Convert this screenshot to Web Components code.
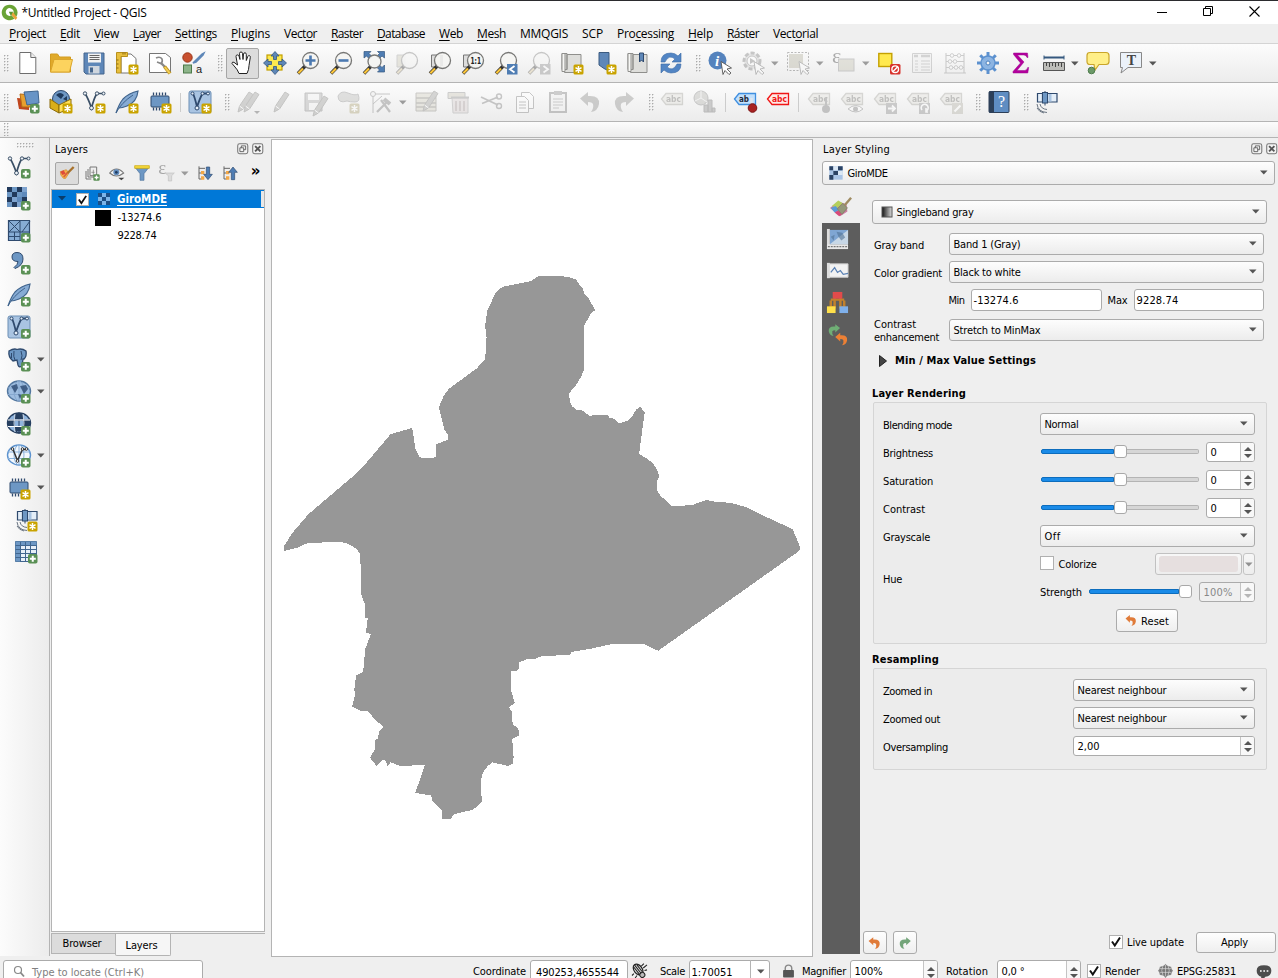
<!DOCTYPE html>
<html lang="en">
<head>
<meta charset="utf-8">
<title>Untitled Project - QGIS</title>
<style>
html,body{margin:0;height:100%;overflow:hidden;background:#efefef}
</style>
</head>
<body>
<qgis-app></qgis-app>
<script>
const define = (name, css, html, onConnect) => {
  const tpl = document.createElement('template');
  tpl.innerHTML = `<style>:host{box-sizing:border-box}*{box-sizing:border-box}${css}</style>${html}`;
  customElements.define(name, class extends HTMLElement {
    constructor() {
      super();
      this.attachShadow({mode: 'open'}).appendChild(tpl.content.cloneNode(true));
    }
    connectedCallback() { if (onConnect) onConnect(this, this.shadowRoot); }
  });
};

/* ---------- icon parts ---------- */
const B = '#6d97c4', D = '#2f4a6e', Y = '#fce94f', G = '#c4a000';
const at = (x, y, s) => `<g transform="translate(${x} ${y})">${s}</g>`;
const plus = at(14, 14, `<rect width="9.5" height="9.5" rx="1.8" fill="#5a9055"/><path d="M4.75 1.8v6M1.8 4.75h6" stroke="#fff" stroke-width="2"/>`);
const star = at(13.5, 13.5, `<rect width="10" height="10" rx="1.5" fill="#c9a300"/><path d="M5 1.5v7M2 3.2l6 3.6M8 3.2L2 6.8" stroke="#fff" stroke-width="1.5"/>`);
const lens = (x = 14.5, y = 9.5, r = 8) => `<path d="M9.2 15L2 22.500" stroke="#333" stroke-width="3.4"/><path d="M7 17.5L2.3 22.2" stroke="#fcc63a" stroke-width="2.2"/><circle cx="${x}" cy="${y}" r="${r}" fill="#f4f4f2" fill-opacity=".92" stroke="#777775" stroke-width="1.3"/>`;
const page = `<path d="M3.8 1.5h11l5 5v16h-16z" fill="#fff" stroke="#6e6e6e"/><path d="M14.8 1.5v5h5" fill="#eee" stroke="#6e6e6e"/>`;
const nodes = `<path d="M3 3.5Q6 8 9.500 18Q12 8 15 3.500h6" fill="none" stroke="#3a4f66" stroke-width="1.700"/><g fill="#eef3f8" stroke="#3a4f66"><circle cx="3" cy="3.500" r="1.700"/><circle cx="9.500" cy="18" r="1.900"/><circle cx="15" cy="3.500" r="1.700"/><circle cx="21.500" cy="3.500" r="1.500"/></g>`;
const vbox = `<rect x="1" y="1" width="22" height="22" rx="2" fill="#a9c4e2" stroke="#6d8fb5"/><path d="M5 3.500Q7 8 9 17Q12 8 14.500 3.500h5" fill="none" stroke="#2f4a6e" stroke-width="1.800"/><g fill="#e5eef8" stroke="#2f4a6e"><circle cx="4.500" cy="3.500" r="1.500"/><circle cx="9" cy="18" r="2"/><circle cx="14.500" cy="3.500" r="1.500"/><circle cx="20" cy="3.500" r="1.500"/></g>`;
const feather = `<path d="M1 23Q4 14 8 9Q14 3 23 1Q22 12 12 16Q7 18 4 18" fill="#86abd4" stroke="#3f638c" stroke-width="1.200"/><path d="M1 23Q6 13 18 5" fill="none" stroke="#3f638c"/>`;
const chip = `<rect x="3" y="6" width="18" height="11" rx="1" fill="${B}" stroke="${D}"/><path d="M5.500 2.500v3M8.500 2.500v3M11.500 2.500v3M14.500 2.500v3M17.500 2.500v3M5.500 17.500v3M8.500 17.500v3M11.500 17.500v3" stroke="${D}" stroke-width="1.300"/>`;
const globe = (f, s, l) => `<ellipse cx="12" cy="11" rx="11.500" ry="10" fill="${f}" stroke="${s}" stroke-width="1.400"/><g fill="none" stroke="${l}" stroke-width="1"><ellipse cx="12" cy="11" rx="5" ry="10"/><path d="M1 8h22M1 14.500h22M12 1v20"/></g>`;
const pencil = `<path d="M4 22l1.500-6L15 2l4 2.500L9.500 19z" fill="#9c9c94" stroke="#77776f"/><path d="M5.500 16l4 3" stroke="#fff"/>`;
const table = `<path d="M2 3h20v18H2z" fill="#d9cf9c" stroke="#857f66"/><path d="M2 8h20M2 13h20M2 17h20" stroke="#857f66" stroke-width="1.500"/>`;
const tag = (f, s, c, t = 'abc') => `<path d="M1.500 9L6 3.500h16.500v11H6z" fill="${f}" stroke="${s}" stroke-width="1.300"/><text x="6" y="12" font-family="DejaVu Sans" font-size="8.500" font-weight="700" textLength="${t.length * 5}" lengthAdjust="spacingAndGlyphs" fill="${c}">${t}</text>`;
const gtag = tag('#e3dfca', '#a5a18c', '#6d6a5c');
const sat = `<path d="M1.500 3.500h5v8.500h-5zM10.500 3.500h10.500v8.500H10.500z" fill="#e4eef8" stroke="#2f4a6e" stroke-width="1.200"/><path d="M14 4v7.500" stroke="#a9c4e2" stroke-width="3"/><rect x="6.500" y="2.500" width="5" height="10.500" fill="#6d97c4" stroke="#2f4a6e"/><path d="M9 1v1.500M9 13v2.500" stroke="#2f4a6e"/><path d="M1 14q1 8 10 8.500M4 14q1 5 7 5.500M1 18q2 4 7 5" fill="none" stroke="#6b7683" stroke-width="1"/>`;
const undo = (c) => `<path d="M1 8.500L9 2v4q12-1 11 8-1 7-8 8 3-4 2-8-1-2-5-2v4z" fill="${c}"/>`;
const redo = (c) => `<g transform="matrix(-1 0 0 1 23 0)">${undo(c)}</g>`;
const book = `<path d="M2 2.500h5v16H2zM7 3.500h14v18H4.500v-3H7z" fill="#dededb" stroke="#8f8f8c"/><path d="M2 2.500h3v18H2z" fill="#f6f6f4" stroke="#8f8f8c"/>`;
const cursor = `<path d="M13 10.500l10.500 6.500-4.500 1 4 4-2 1.500-4-4-2 4z" fill="#fff" stroke="#555" stroke-width=".9"/>`;
const check6 = (a, b, c, w) => { let s = ''; for (let i = 0; i < 9; i++) s += `<rect x="${(i % 3) * w}" y="${Math.floor(i / 3) * w}" width="${w}" height="${w}" fill="${[a, b, a, b, c, b, a, b, a][i]}"/>`; return s; };

const ICONS = {
  logo: `<path d="M12 1a11 11 0 1 0 7 19.500L15 16a5.500 5.500 0 1 1 2-2l4.500 4A11 11 0 0 0 12 1z" fill="#6aa436"/><path d="M12 12l5-.5 6 8-2.500 3z" fill="#e8a33a"/><path d="M11 11h6l-3 6z" fill="#589632"/>`,
  new: page,
  open: `<path d="M1.500 3h7l2 3h11v15h-20z" fill="#e0aa2a" stroke="#d39c20"/><path d="M1.500 21L5 8.500h18.500L20.500 21z" fill="#fcd35e" stroke="#dba62c"/>`,
  save: `<path d="M2 2h20v21H4l-2-2z" fill="#5e87b8" stroke="#45658c"/><path d="M6 2.500h13v9H6z" fill="#f2f2f2"/><path d="M7.500 4.500h10M7.500 6.500h10M7.500 8.500h10" stroke="#666"/><path d="M6.500 15h11v7.500h-11z" fill="#cfd6de"/><path d="M8 16.500h3v5H8z" fill="#45658c"/>`,
  layout: `<path d="M6 3h10l5 4.500V22H6z" fill="#fff" stroke="#777"/><path d="M1.500 1.500h11v4h-6.500v16.500H1.500z" fill="#e8bf3d" stroke="#b8901c"/><path d="M8 1.500v2M10 1.500v2M1.500 9h2M1.500 13h2M1.500 17h2" stroke="#8a6a10"/>${star}`,
  layouts: `<path d="M1.500 2.500h16l5 4v15h-21z" fill="#fff" stroke="#666" stroke-width=".9"/><path d="M8 7q4-2 6 1 1 3-1 4.500l-4-1.500" fill="none" stroke="#888" stroke-width="1.600"/><path d="M13 12l4 4" stroke="#888" stroke-width="2.400"/><path d="M16.500 15.500l5.500 7" stroke="#b98f1e" stroke-width="3.600"/><path d="M16.800 16l5 6.300" stroke="#f3cf55" stroke-width="2"/>`,
  style: `<circle cx="6.500" cy="6.500" r="4.700" fill="#c8502f" stroke="#9c3415"/><path d="M13 11l8-8 2-1-1 2-7 7-3 1z" fill="#5e87b8" stroke="#5e87b8" stroke-width="1.500"/><rect x="2.500" y="14" width="8" height="8" fill="#8db48a" stroke="#4c7b4a"/><text x="15" y="22" font-family="Liberation Sans" font-size="11" fill="#222">a</text>`,
  hand: `<path d="M8.500 23Q7 19 4.500 16.500L1.500 13q0-2 2-1.200L7 14.500 5.500 6q0-1.600 1.300-1.600t1.700 1.300L9.500 9 9 3q0-1.500 1.500-1.500T12 3l.5 6 .5-5.500q.2-1.300 1.500-1.200 1.300.1 1.300 1.500V10l1.500-4q.5-1.200 1.600-.9 1.100.4.900 1.700L18.500 15q0 4-2 8z" fill="#fff" stroke="#222" stroke-width="1" transform="translate(.5 -.5)"/>`,
  pansel: `<rect x="4" y="4" width="15" height="15" fill="${Y}" stroke="${G}" stroke-width="1.200"/><path d="M12 .5l4 4.500h-2.500v3.500h-3V5H8zM12 23.500l4-4.500h-2.500v-3.500h-3V19H8zM.5 12L5 8v2.500h3.500v3H5V16zM23.500 12L19 8v2.500h-3.500v3H19V16z" fill="#5e87b8" stroke="#35587f" stroke-width=".8"/>`,
  zin: lens() + `<path d="M14.500 4.500v10M9.500 9.500h10" stroke="#4c79b0" stroke-width="2.600"/>`,
  zout: lens() + `<path d="M9.500 9.500h10" stroke="#4c79b0" stroke-width="2.600"/>`,
  zfull: `<path d="M2 .5h7L7 2.500l3 3L7.500 8l-3-3L2 7zM22.500 .5h-7l2 2-3 3L17 8l3-3 2.500 2zM22.500 21h-7l2-2-3-3 2.500-2.500 3 3 2.500-2.500z" fill="#4f7db3" stroke="#35587f" stroke-width=".7"/>` + lens(12.500, 10.500, 6.500),
  zsel: `<path d="M2 4h8v12H2z" fill="#d5cb8c" stroke="#999"/>` + lens(),
  zlayer: `<path d="M3.500 4h9v12h-9z" fill="#ddd" stroke="#777"/>` + lens() + `<path d="M14 4v11" stroke="#ddd"/>`,
  znat: `<path d="M2.500 4h9v12h-9z" fill="#ddd" stroke="#777"/>` + lens() + `<text x="9.500" y="12.800" font-family="DejaVu Sans" font-size="9" font-weight="700" textLength="10.500" lengthAdjust="spacingAndGlyphs" fill="#222">1:1</text>`,
  zlast: lens() + `<rect x="13" y="13" width="10.500" height="10.500" fill="#4f7db3"/><path d="M20.500 15l-4.500 3.200 4.500 3.200" fill="none" stroke="#fff" stroke-width="1.800"/>`,
  znext: lens() + `<rect x="13" y="13" width="10.500" height="10.500" fill="#888"/><path d="M16.500 15l4.500 3.200-4.500 3.200" fill="none" stroke="#fff" stroke-width="1.800"/>`,
  newview: book + star,
  newbm: `<path d="M6 1.500h10V20l-5-2.500L6 14z" fill="#5e87b8" stroke="#3b5b80"/>${star}`,
  bm: book + `<path d="M13.500 2h4v9l-2-2-2 2z" fill="#5e87b8" stroke="#2f4a6e"/>`,
  refresh: `<path d="M2 11Q2 2 12 2q4 0 7 3l3-3v9h-9l3-3q-6-5-10 3z" fill="#5285c4" stroke="#3a69a5" stroke-width=".6"/><path d="M22 13q0 9-10 9-4 0-7-3l-3 3v-9h9l-3 3q6 5 10-3z" fill="#5285c4" stroke="#3a69a5" stroke-width=".6"/>`,
  info: `<circle cx="9.500" cy="9.500" r="9" fill="#5583bd"/><text x="9" y="14.500" text-anchor="middle" font-family="Liberation Serif" font-size="15" font-weight="700" font-style="italic" fill="#fff">i</text>${cursor}`,
  action: `<circle cx="11" cy="10" r="8" fill="#ccc" stroke="#777" stroke-width="3" stroke-dasharray="4 2"/><circle cx="11" cy="10" r="5" fill="#fff" stroke="#777"/><path d="M9 7l5 3-5 3z" fill="#777"/>${cursor}`,
  select: `<rect x="1.500" y="1.500" width="21" height="18" fill="none" stroke="#555" stroke-dasharray="2 1.500"/><path d="M3 3h14v14H3z" fill="#b9b06f"/>${cursor}`,
  selexp: `<text x="0" y="12" font-family="Liberation Serif" font-size="22" fill="#333">ε</text><rect x="6.500" y="8" width="15.500" height="12" fill="#c9c088" stroke="#888"/>`,
  desel: `<rect x="1.800" y="2.500" width="13" height="13" fill="#ffe94e" stroke="${G}" stroke-width="1.400"/><rect x="13" y="13" width="10.500" height="10.500" rx="1.500" fill="#d8322c"/><circle cx="18.200" cy="18.200" r="3.300" fill="none" stroke="#fff" stroke-width="1.400"/><path d="M16 20.500l4.500-4.500" stroke="#fff" stroke-width="1.400"/>`,
  attrs: `<path d="M2.500 2.500h19v19h-19z" fill="#eee" stroke="#999"/><path d="M4 5h4M11 5h9" stroke="#999" stroke-width="2.500"/><path d="M5 10h3M5 13h3M5 16h3M5 19h3M11 10h9M11 13h9M11 16h9M11 19h9" stroke="#999"/>`,
  abacus: `<path d="M3 2v20M21 2v20M3 4.500h18M3 10.500h18M3 16.500h18M1 22h22" stroke="#888" stroke-width="1.100"/><g fill="#fff" stroke="#888"><circle cx="9" cy="4.500" r="1.800"/><circle cx="16" cy="4.500" r="1.800"/><circle cx="7" cy="10.500" r="1.800"/><circle cx="12" cy="10.500" r="1.800"/><circle cx="8" cy="16.500" r="1.800"/><circle cx="13" cy="16.500" r="1.800"/><circle cx="18" cy="16.500" r="1.800"/></g>`,
  gear: `<g stroke="#5c91cf" stroke-width="3">${[0, 45, 90, 135].map(a => `<path d="M12 1v22" transform="rotate(${a} 12 12)"/>`).join('')}</g><circle cx="12" cy="12" r="7" fill="#8cb4e2" stroke="#5c91cf" stroke-width="1.400"/><circle cx="12" cy="12" r="2" fill="#f6f6f6" stroke="#4c80bd"/>`,
  sigma: `<path d="M4.500 2H18.500l.5 4.500h-1q-.8-2.500-3-2.500H8.500l6.500 7-7 8.500h7.500q2.500 0 3.200-3h1l-.9 5.500H4v-1.500l7.500-8.500-7-8.500z" fill="#b4009c" stroke="#9a0a90" stroke-width=".5"/>`,
  measure: `<path d="M2 6.500h20" stroke="#35587f" stroke-width="2"/><path d="M2 4.500v4M22 4.500v4" stroke="#35587f"/><path d="M1.500 11.500h21v8h-21z" fill="#bdbdb9" stroke="#555"/><path d="M4.500 12v3M7.500 12v4M10.500 12v3M13.500 12v4M16.500 12v3M19.500 12v4" stroke="#444"/>`,
  tip: `<path d="M4 1.500h16q3 0 3 3v6q0 3-3 3h-7L9 19l-1-5.500H4q-3 0-3-3v-6q0-3 3-3z" fill="#ffef88" stroke="#c9a52a" stroke-width="1.200"/><circle cx="5.500" cy="19.500" r="3.300" fill="#6b9968" stroke="#4c7b4a"/>`,
  textann: `<path d="M1.500 1.500h21v15H9L2 22l1.500-5.500h-2z" fill="#ebf2fa" stroke="#888"/><text x="12.500" y="13.800" text-anchor="middle" font-family="Liberation Serif" font-size="14" font-weight="700" fill="#444">T</text>`,
  dsm: `<path d="M1 8l12 1v11L3 19z" fill="#c0461e"/><path d="M4 4l12 1v12H6z" fill="#e8a02f" stroke="#b66c15"/><path d="M8 2l14-1 1 12-12 2z" fill="#6894c6" stroke="#41668f"/>${plus}`,
  geopkg: `<circle cx="12" cy="9" r="8.500" fill="#6d97c4" stroke="${D}"/><path d="M7 5q4-4 8 0l-3 4zM14 9l4-3v5z" fill="#1f3a5c"/><path d="M1 9l9 6v8l-9-5z" fill="#d9ae1b" stroke="#8a6b0a"/><path d="M10 15l12-6v9l-12 5z" fill="#ffe05a" stroke="#8a6b0a"/>${star}`,
  newvec: nodes + star, newsp: feather + star, mem: chip + star, virt: vbox + star,
  pencils: at(-3, 0, pencil) + at(3, 0, pencil) + `<path d="M17 21h6l-3 3z" fill="#555"/>`,
  pencil, savee: `<path d="M2 3h17v18H2z" fill="#a9a9a9" stroke="#777"/><path d="M5 4h11v6H5zM6 13h9v7H6z" fill="#f4f4f4"/>` + at(6, 4, pencil),
  poly: `<path d="M2 6q3-6 10-3t10 1q3 8-3 8-5 0-8-1-9 3-9-5z" fill="#b9b9b1" stroke="#888"/>${star}`,
  vertex: `<path d="M4 4h17M4 4v19M4 14l9-8" stroke="#777" fill="none"/><circle cx="4" cy="4" r="2.500" fill="#eee" stroke="#777"/><path d="M8 22l10-10M12 10l9 12" stroke="#777" stroke-width="2.300" fill="none"/><path d="M15 9l6 5" stroke="#777" stroke-width="4"/>`,
  edit: table + at(5, -1, pencil),
  del: `<path d="M1 2.500h17v6H1z" fill="#cfc791" stroke="#888"/><path d="M5 8h16v15H6z" fill="#e5c9c9" stroke="#999"/><path d="M4 7.500h18" stroke="#888" stroke-width="2"/><path d="M9 11v10M13 11v10M17 11v10" stroke="#a77" stroke-width="1.300"/>`,
  cut: `<path d="M1 7l17 8M2 13.500L18 7" stroke="#777" stroke-width="1.800"/><circle cx="19" cy="6.500" r="2.500" fill="none" stroke="#777" stroke-width="1.400"/><circle cx="19" cy="16" r="2.500" fill="none" stroke="#777" stroke-width="1.400"/>`,
  copy: `<path d="M8.500 2.500h8l4 4v12h-12z" fill="#fff" stroke="#777"/><path d="M3.500 6.500h8l4 4v12h-12z" fill="#fff" stroke="#777"/><path d="M6 12h7M6 15h7M6 18h7" stroke="#777"/>`,
  paste: `<path d="M4 3h16v19H4z" fill="#eee" stroke="#777" stroke-width="2"/><path d="M8 1h8v4H8z" fill="#888"/><path d="M7 9h10M7 12h10M7 15h10M7 18h6" stroke="#888"/>`,
  undog: undo('#8a8a85'), redog: redo('#8a8a85'),
  undo: undo('#e07b39'), redo: redo('#74a57a'),
  tag: gtag, diagram: `<circle cx="8" cy="8" r="7" fill="#b3b1a2" stroke="#777"/><path d="M8 8V1M8 8l6 4M8 8l-6 3" stroke="#eee"/><path d="M11 15h4v7h-4zM15 10h4v12h-4zM19 18h3v4h-3z" fill="#8d8d8d" stroke="#666"/>`,
  tagpin: tag('#c3e0fb', '#3f8fe0', '#1d2a3a', 'ab') + `<path d="M18.500 8v8" stroke="#dfe6ee" stroke-width="2.500"/><circle cx="19.500" cy="18" r="4.300" fill="#a82222" stroke="#7c1212"/>`,
  tagred: tag('#ffe9e6', '#f01616', '#f01616'),
  tagp: gtag + `<circle cx="19" cy="19" r="4" fill="#777"/><path d="M19 8v8" stroke="#777" stroke-width="2"/>`,
  tage: gtag + `<path d="M8 19q8-7 15 0-7 6-15 0z" fill="#fff" stroke="#777"/><circle cx="15.500" cy="19" r="2.500" fill="#777"/>`,
  tagm: gtag + `<path d="M13 13h11v11H13z" fill="#888"/><path d="M15 18.500h7M19 15.500l3 3-3 3" stroke="#fff" fill="none" stroke-width="1.800"/>`,
  tagr: gtag + `<path d="M13 13h11v11H13z" fill="#888"/><path d="M16 20a3.500 3.500 0 1 1 4 1M20 18v4h2" stroke="#fff" fill="none" stroke-width="1.600"/>`,
  tagc: gtag + `<path d="M13 13h11v11H13z" fill="#b7b08a"/><path d="M15.500 21.500l6-6" stroke="#fff" stroke-width="2.200"/>`,
  help: `<rect x="2" y="1.500" width="20" height="21" rx="1" fill="#5f8dc2" stroke="#2c3f58"/><path d="M2 1.500h5v21H2z" fill="#2c3f58"/><text x="14.500" y="17" text-anchor="middle" font-family="Liberation Serif" font-size="16" fill="#fff">?</text>`,
  sat, satstar: at(2, 0, sat) + star,
  addvec: nodes + plus,
  addras: `<g>${[0,1,2,3].map(r => [0,1,2,3].map(c => `<rect x="${c*5}" y="${r*5}" width="5" height="5" fill="${['#223a5c','#6d97c4','#223a5c','#7ea3cf','#6d97c4','#223a5c','#6d97c4','#5f8abc','#223a5c','#7ea3cf','#5f8abc','#223a5c','#6d97c4','#223a5c','#7ea3cf','#5f8abc'][r*4+c]}"/>`).join('')).join('')}</g>${plus}`,
  addmesh: `<path d="M1.500 1.500h21v20h-21z" fill="#86abd4" stroke="${D}" stroke-width="1.200"/><path d="M2 13h21M13 2v20M2 2l11 11M2 13L13 2M15 13l8-11M7.500 13v9M2 17.500h11" stroke="${D}" fill="none"/>${plus}`,
  addcsv: `<path d="M5 6q0-4.500 5-4.500 6 0 6 6.500 0 6.500-8 9.500l-1-1q4-3 4-6-6 0-6-4.500z" fill="${B}" stroke="${D}"/>${plus}`,
  addsp: feather + plus, addvirt: vbox + plus,
  addpg: `<path d="M2 3q5-3 8-1.500Q15 0 19 3q1 5-2 8h-1l-1 7q-3 2-4-1l-1-5-4 1Q1 9 2 3z" fill="${B}" stroke="${D}" stroke-width="1.300"/><path d="M7 3q-1 6 1 9M14 3q2 5 0 9M4.500 5v5" fill="none" stroke="${D}"/>${plus}`,
  addwms: globe('#9ebde0', '#53779f', '#86a8cf') + `<path d="M4 6l6-2 1 4-3 5zM13 6l6-1 2 4-4 5zM11 14l4 1-2 4z" fill="#314f77" opacity=".85"/>${plus}`,
  addwcs: globe('#8fb4dd', '#263f60', '#263f60') + `<path d="M8 2h8v5H8zM1 8h6v6H1zM8 14.500h8v5H8zM17 8h6v6h-6z" fill="#263f60"/><path d="M1 8h22M1 14.500h22" stroke="#fff"/><path d="M8 2q-2 9 0 18M16 2q2 9 0 18" stroke="#e5eef8" stroke-width=".8" fill="none"/>${plus}`,
  addwfs: globe('#f3f8fd', '#5d93cf', '#8bb3dd') + `<path d="M6 5.500l4.500 11L15.500 5.500h4" fill="none" stroke="#333" stroke-width="1.500"/><g fill="#fff" stroke="#333"><circle cx="5.500" cy="5" r="1.300"/><circle cx="10.500" cy="17" r="1.300"/><circle cx="15.500" cy="5" r="1.300"/><circle cx="19.500" cy="5" r="1.300"/></g>${plus}`,
  addgrid: `<path d="M1.500 1.500h21v20h-21z" fill="#e7eff8" stroke="#41668f"/><path d="M1.500 1.500h21v4h-21zM1.500 1.500h5v20h-5z" fill="#6d97c4"/><path d="M1.500 5.500h21M1.500 9.500h21M1.500 13.500h21M1.500 17.500h21M6.500 2v20M11.500 2v20M16.500 2v20" stroke="#41668f"/>${plus}`,
  brush: `<path d="M2 10l9-3 4 5-5 8q-4 1-5-2-3-2-3-8z" fill="#f7b04a" stroke="#d08a2a"/><path d="M2 10l5-2 3 5-5 2z" fill="#df4b3c"/><path d="M7 18l6-7" stroke="#d8603f" stroke-width="2.500"/><path d="M13 12l9-9" stroke="#a8722d" stroke-width="3.500"/>`,
  group: `<path d="M3 9v12h8M6 6v12h10M9 3h10v13H9z" fill="none" stroke="#777" stroke-width="1.500"/><path d="M14 7v8M11 11h5" stroke="#777"/>${plus}`,
  eye: `<path d="M1 12q10-12 21 0-11 9-21 0z" fill="#f5f5f5" stroke="#777" stroke-width="1.600"/><circle cx="11" cy="11" r="4.500" fill="#5f8abc"/><circle cx="11" cy="11" r="2" fill="#1f3a5c"/><path d="M14 19h9l-4.500 4z" fill="#444"/>`,
  filter: `<path d="M2 4h20l-7 9v10h-6V13z" fill="#6d97c4" stroke="#53779f"/><path d="M1 1h22v4H1z" fill="#f5d93e" stroke="#c9a300"/>`,
  efilter: `<text x="-1" y="14" font-family="Liberation Serif" font-size="28" fill="#333">ε</text><path d="M9 12h14l-4 4v8h-5v-8z" fill="#bbb" stroke="#777"/>`,
  expand: `<path d="M3 2v19h4M3 5h9M3 12h5" fill="none" stroke="#666" stroke-width="1.500"/><path d="M6 9h5v5H6zM6 17h5v5H6z" fill="#f3a847"/><path d="M14 3h5v11h4l-6.500 8L10 14h4z" fill="#4f7db3" stroke="#2f4a6e"/>`,
  collapse: `<path d="M3 2v19h4M3 5h9M3 12h5" fill="none" stroke="#666" stroke-width="1.500"/><path d="M6 9h5v5H6zM6 17h5v5H6z" fill="#f3a847"/><path d="M14 22h5V11h4l-6.500-8L10 11h4z" fill="#4f7db3" stroke="#2f4a6e"/>`,
  ras: `<path d="M2 2h20v20H2z" fill="#a9c4e6"/><path d="M2 2h6v6H2zM15 2h7v6h-7zM8 9h7v6H8zM2 15h6v7H2z" fill="#2b4365"/><path d="M8 2h7v6H8zM15 9h7v6h-7z" fill="#dbe8f5"/>`,
  rassel: at(3, 3, check6('#1d4f86', '#7db4e8', '#1d4f86', 6)),
  gray: `<defs><linearGradient id="g"><stop stop-color="#111"/><stop offset="1" stop-color="#ddd"/></linearGradient></defs><rect x="2" y="2" width="20" height="20" fill="url(#g)" stroke="#555" stroke-width="2"/>`,
  palette: `<path d="M0 13l9-7 9 3 1 8-8 5z" fill="#c77d9e"/><path d="M2 11l7-6 5 3-6 5z" fill="#b5cf5d"/><path d="M1 13l5-2 4 4-5 3z" fill="#5b9bd8"/><path d="M5 18l4-2 4 4-3 2z" fill="#d84a7a"/><path d="M8 14l6-6 5 5-6 7z" fill="#94987a" stroke="#7f7d63" stroke-width=".8"/><path d="M16 10l7-8" stroke="#a08c62" stroke-width="2.600"/>`,
  transp: `<path d="M4 2h19v15H4z" fill="#7fa6d3"/><path d="M4 17L23 2v15z" fill="#c7d7e6"/><path d="M11 4l6 1 3 5-4 3-3-4zM5 9l4-2-1 6z" fill="#4f7195" opacity=".6"/><path d="M1 1h3v21H1z" fill="#ddd"/><path d="M1 17h22v5H1z" fill="#e8e8e8"/><path d="M2 19.500h20" stroke="#555" stroke-dasharray="2 1"/>`,
  histo: `<path d="M2 4h21v14H2z" fill="#f2f2f2" stroke="#ccc"/><path d="M1 3h3v16H1z" fill="#ddd"/><path d="M5 13l4-5 3 5 3-2 3 4 5-1" fill="none" stroke="#5b82b4" stroke-width="1.300"/>`,
  hier: `<path d="M9 6v11H4M15 6v11h5M5 10v9M19 10v9M5 9h14" fill="none" stroke="#c2812c" stroke-width="2.600"/><path d="M7 1h10v7H7z" fill="#e24b4b"/><path d="M1 16h9v7H1z" fill="#ffe04a"/><path d="M14 16h9v7h-9z" fill="#7fb0ea"/>`,
  hist: at(1, 0, `<g transform="scale(.62)">${redo('#6fae75')}</g>`) + at(9, 9, `<g transform="scale(.65)">${undo('#ec8035')}</g>`),
  search: `<circle cx="10" cy="10" r="7" fill="none" stroke="#888" stroke-width="2.400"/><path d="M15 15l7 8" stroke="#888" stroke-width="3.500"/>`,
  bug: `<g transform="rotate(-38 11 12)"><ellipse cx="11" cy="10" rx="6.500" ry="9.500" fill="#ddd" stroke="#222" stroke-width="2"/><path d="M8 3v14M11 1v18M14 3v14" stroke="#222" stroke-width="1.600"/><circle cx="11" cy="21" r="4" fill="#bbb" stroke="#222" stroke-width="1.700"/></g><path d="M15 5l4-4M18 8l6-5M3 17l-3 3M8 20l-3 4M20 12l4-1" stroke="#222" stroke-width="1.700"/>`,
  lock: `<path d="M6 12V8q0-6 6-6t6 6v4" fill="none" stroke="#888" stroke-width="2.600"/><rect x="2" y="11" width="20" height="14" rx="1.500" fill="#555"/>`,
  crs: `<path d="M12 1l3 4 6 1 1 4 2 2-2 3-1 4-6 1-3 4-3-4-6-1-1-4-2-3 2-2 1-4 6-1z" fill="#888"/><ellipse cx="12" cy="12" rx="9.500" ry="8.500" fill="#777"/><path d="M3 9h18M3 15h18M12 3v18M8 4q-4 8 0 16M16 4q4 8 0 16" stroke="#ddd" fill="none"/>`,
  msg: `<path d="M12 2q11 0 11 8t-9 9q-3 4-7 5l1-5Q1 17 1 10q0-8 11-8z" fill="#4d4d4d"/><path d="M6 10.500h2.500M11 10.500h2.500M16 10.500h2.500" stroke="#fff" stroke-width="2.500"/>`,
  float: `<rect x="1.500" y="1.500" width="21" height="21" rx="4" fill="#f4f4f4" stroke="#777" stroke-width="2.200"/><path d="M9 10V6h9v8h-4M6 10h8v8H6z" fill="none" stroke="#555" stroke-width="1.800"/>`,
  close: `<rect x="1.500" y="1.500" width="21" height="21" rx="4" fill="#f4f4f4" stroke="#777" stroke-width="2.200"/><path d="M6.500 6.500l11 11M17.500 6.500l-11 11" stroke="#555" stroke-width="4"/>`,
};

define('q-icon', `:host{display:block;flex:none;width:24px;height:24px}:host([off]){filter:grayscale(.7);opacity:.38}svg{display:block;width:100%;height:100%;overflow:visible}`,
  `<svg viewBox="0 0 24 24"></svg>`,
  (el, r) => { r.querySelector('svg').innerHTML = ICONS[el.getAttribute('name')] || ''; });

define('tool-btn', `:host{display:flex;flex:none;width:33px;height:31px;align-items:center;justify-content:center;border:1px solid transparent;border-radius:2px}:host([on]){background:#dcdcdc;border-color:#a6a6a6}`, `<slot></slot>`);
define('drop-arrow', `:host{display:block;flex:none;width:12px;height:5px;padding-left:1px}:host([off]){opacity:.55}svg{display:block}`, `<svg width="8" height="5"><path d="M0 .5h7.500L3.800 4.500z" fill="#555"/></svg>`);
define('tool-grip', `:host{display:block;flex:none;width:16px;height:17px;padding-left:8px}i{display:block;width:5px;height:17px;background:radial-gradient(circle at .7px .7px,#aaa .7px,transparent .9px) 0 0/3px 3px}`, `<i></i>`);
define('tool-sep', `:host{display:block;flex:none;width:7px;height:19px;padding-left:3px}i{display:block;width:1px;height:19px;background:#ccc}`, `<i></i>`);
define('tool-row', `:host{display:flex;align-items:center;height:39px;background:linear-gradient(#fcfcfc,#ececec);border-bottom:1px solid #b4b4b4}`, `<slot></slot>`);

define('title-bar', `:host{display:flex;height:24px;background:#fff;border-top:1px solid #2b2b2e;align-items:center;font:12px/16px "Open Sans",sans-serif}
 q-icon{width:17px;height:17px;margin:-1px 3.500px 0 1px}.b{display:flex;margin-left:auto;gap:35px;padding:0 18px 3px 0;align-items:center}svg{display:block}`,
 `<q-icon name="logo"></q-icon><fit-text w="125">*Untitled Project - QGIS</fit-text>
 <div class="b"><svg width="11" height="11"><path d="M0 6.500h10" stroke="#000"/></svg><svg width="11" height="11"><path d="M.5 2.500h7v7h-7zM2.500 2.500v-2h7v7h-2" fill="none" stroke="#000"/></svg><svg width="11" height="11"><path d="M.5 .5l10 10M10.500 .5l-10 10" stroke="#000" stroke-width="1.100"/></svg></div>`);

const menus = [['<u>P</u>roject',37],['<u>E</u>dit',20],['<u>V</u>iew',25],['<u>L</u>ayer',28],['<u>S</u>ettings',42],['<u>P</u>lugins',39],['Vect<u>o</u>r',33],['<u>R</u>aster',32],['<u>D</u>atabase',48],['<u>W</u>eb',24],['<u>M</u>esh',29],['MMQGIS',48],['SCP',21],['Pro<u>c</u>essing',57],['<u>H</u>elp',25],['<u>R</u>áster',32],['Vect<u>o</u>rial',45]];
define('menu-bar', `:host{display:flex;height:20px;gap:14px;padding:1px 0 0 9px;align-items:center;background:#efefef;border-bottom:1px solid #d4d4d4;font:12px/16px "Open Sans",sans-serif}u{text-underline-offset:2px}`,
 menus.map(m => `<fit-text w="${m[1]}">${m[0]}</fit-text>`).join(''));

const btn = (n, off) => `<tool-btn><q-icon name="${n}" ${off ? 'off' : ''}></q-icon></tool-btn>`;
const on = s => s.split(' ').map(n => btn(n)).join('');
const off = s => s.split(' ').map(n => btn(n, 1)).join('');
define('main-toolbars', `:host{display:block}.g0{width:11.500px;padding-left:4px}.thin{height:16px}.thin tool-grip{height:13px;overflow:hidden;padding-left:4px}`,
 `<tool-row><tool-grip class="g0"></tool-grip>${on('new open save layout layouts style')}<tool-grip></tool-grip>
 <tool-btn on><q-icon name="hand"></q-icon></tool-btn>${on('pansel zin zout zfull')}${off('zsel')}${on('zlayer znat zlast')}${off('znext')}${on('newview newbm bm refresh')}<tool-grip></tool-grip>
 ${on('info')}${off('action')}<drop-arrow off></drop-arrow>${off('select')}<drop-arrow off style="width:13px"></drop-arrow>${off('selexp')}<drop-arrow off></drop-arrow>${on('desel')}${off('attrs abacus')}${on('gear sigma measure')}<drop-arrow style="padding:0;width:11px"></drop-arrow>${on('tip textann')}<drop-arrow></drop-arrow></tool-row>
 <tool-row><tool-grip class="g0"></tool-grip>${on('dsm geopkg newvec newsp mem')}<tool-sep></tool-sep>${on('virt')}<tool-grip></tool-grip>
 ${off('pencils pencil savee poly vertex')}<drop-arrow off></drop-arrow>${off('edit del cut copy paste undog redog')}<tool-grip style="width:15px"></tool-grip>${off('tag diagram')}<tool-sep></tool-sep>${on('tagpin tagred')}<tool-sep style="width:8px"></tool-sep>${off('tagp tage tagm tagr tagc')}<tool-grip style="width:15px"></tool-grip>${on('help')}<tool-grip></tool-grip>${on('sat')}</tool-row>
 <tool-row class="thin"><tool-grip></tool-grip></tool-row>`);

define('source-bar', `:host{display:block;width:50px;height:818px;border-right:1px solid #b4b4b4;background:linear-gradient(90deg,#fcfcfc,#ececec);padding-top:5px}
 .g{width:17px;height:5px;margin:0 0 3px 17px;background:radial-gradient(circle at .7px .7px,#aaa .7px,transparent .9px) 0 0/3px 3px}
 .r{display:flex;height:32.080px;align-items:center;padding-left:7px;gap:5px}.r.c{padding-left:13.500px}`,
 `<div class="g"></div>` + ['addvec','addras','addmesh','addcsv','addsp','addvirt','addpg*','addwms*','addwcs','addwfs*','mem*'].map(n => `<div class="r"><q-icon name="${n.replace('*','')}"></q-icon>${n.endsWith('*') ? '<drop-arrow></drop-arrow>' : ''}</div>`).join('') +
 `<div class="r c"><q-icon name="satstar"></q-icon></div><div class="r c"><q-icon name="addgrid"></q-icon></div>`);

define('dock-title', `:host{display:flex;height:22px;align-items:center;gap:3px;font-size:11px}slot{display:block}.s{flex:1}q-icon{width:11.500px;height:11.500px;margin-top:-1px}`,
 `<slot></slot><span class="s"></span><q-icon name="float"></q-icon><q-icon name="close"></q-icon>`);

define('q-check', `:host{display:flex;flex:none;width:14px;height:14px;border:1px solid #b0b0b0;background:#fff}svg{display:none}:host([checked]) svg{display:block}`,
 `<svg width="12" height="12" viewBox="0 0 12 12"><path d="M2 5.500l2.800 4L10 1.500" fill="none" stroke="#111" stroke-width="2"/></svg>`);

define('layers-dock', `:host{display:flex;flex-direction:column;width:214px;height:818px;margin-left:1px;font:11px/14px "DejaVu Sans Condensed","DejaVu Sans",sans-serif}
 dock-title{padding:1px 2px 0 4px}.tb{display:flex;align-items:center;height:30px;padding-left:4px;margin-top:-1px;padding-bottom:2px}.tb tool-btn{width:25.200px;height:23px}.tb tool-btn[on]{width:24px}.tb q-icon{width:16px;height:16px}.more{font:700 15px/12px "DejaVu Sans",sans-serif;margin:-4px 0 0 8px}
 .tree{height:743px;background:#fff;border:1px solid #b4b4b4}.row{display:flex;align-items:center;height:18px;padding-top:1px}
 .sel{background:#0078d7;color:#fff;position:relative;font-weight:700;font-size:11.500px;padding-top:0}.sel svg{margin:-1px 10px 0 6px}.sel q-check{width:13px;height:13px;margin-right:7px}.sel q-icon{width:16px;height:16px;margin-right:5px}.sel u{text-underline-offset:2px}.sel b{margin-left:auto;width:3px;height:16px;background:#e8e8e8;margin-right:0}
 .sw{width:16px;height:16px;margin:0 6.500px 0 43px;background:#000}.w{background:#fff}
 .tabs{display:flex;align-items:flex-start;margin-top:1px;border-top:1px solid #b4b4b4}.tab{display:flex;align-items:center;justify-content:center;border:1px solid #b4b4b4;border-top:0;padding-right:3px}.t1{width:64px;height:20px;background:#dcdcdc;border-right:0;padding-top:1px}.t2{width:56px;height:22px;background:#f6f6f6;border-radius:0 0 2px 2px;padding-top:2px}`,
 `<dock-title><fit-text w="33">Layers</fit-text></dock-title>
 <div class="tb"><tool-btn on><q-icon name="brush"></q-icon></tool-btn>${on('group eye filter')}${off('efilter')}<drop-arrow off style="width:12.500px;padding-left:1px"></drop-arrow>${on('expand collapse')}<span class="more">»</span></div>
 <div class="tree"><div class="row sel"><svg width="8" height="5"><path d="M0 0h8L4 4.500z" fill="#0a3c6b"/></svg><q-check checked></q-check><q-icon name="rassel"></q-icon><fit-text w="50"><u>GiroMDE</u></fit-text><b></b></div>
 <div class="row"><span class="sw"></span><fit-text w="44">-13274.6</fit-text></div><div class="row"><span class="sw w"></span><fit-text w="39">9228.74</fit-text></div></div>
 <div class="tabs"><div class="tab t1"><fit-text w="39">Browser</fit-text></div><div class="tab t2"><fit-text w="32">Layers</fit-text></div></div>`);

define('map-canvas', `:host{display:block;width:542px;height:818px;margin:1px 0 0 6px;border:1px solid #b4b4b4;background:#fff}svg{display:block}`,
 `<svg width="540" height="816"><g transform="translate(-2 120) scale(.34758 .36351)" shape-rendering="crispEdges"><path fill="#979797" d="M772 44L835 44 858 47 881 53 890 68 899 76 904 93 918 107 935 138 921 150 902 185 902 305 893 325 878 347 860 367 863 390 870 403 882 412 898 414 920 429 935 426 970 426 977 434 990 437 1003 450 1030 442 1042 430 1054 411 1066 404 1078 420 1072 460 1062 533 1085 547 1103 560 1115 580 1121 597 1114 605 1113 633 1125 650 1137 660 1155 678 1215 674 1255 660 1280 665 1325 668 1367 679 1405 697 1503 740 1515 765 1525 790 1523 800 1117 1075 1103 1070 1078 1057 990 1055 920 1070 868 1078 864 1086 780 1090 765 1097 738 1099 717 1106 715 1126 710 1131 693 1131 694 1185 704 1218 688 1231 696 1243 698 1277 714 1289 718 1308 697 1318 701 1368 698 1385 685 1392 640 1382 626 1392 613 1410 607 1430 609 1490 585 1512 532 1524 517 1539 495 1539 495 1515 467 1488 464 1473 418 1466 446 1389 375 1392 347 1382 338 1391 331 1376 323 1376 306 1391 288 1370 302 1345 302 1320 311 1317 313 1299 327 1285 303 1265 282 1242 262 1241 236 1229 246 1192 242 1185 248 1143 268 1133 274 1070 290 1029 276 1025 281 986 274 985 272 945 263 920 261 890 262 870 259 808 247 793 220 779 205 776 110 778 80 791 40 801 40 788 60 757 72 742 112 698 235 598 265 572 347 479 409 462 419 522 430 543 458 546 478 542 478 507 512 494 511 480 502 467 486 405 499 375 515 354 595 298 617 275 622 250 623 212 619 180 625 140 648 92 668 74 750 58Z"/></g></svg>`);

define('q-combo', `:host{display:flex;flex:none;height:22px;align-items:center;border:1px solid #ababab;border-radius:3px;background:linear-gradient(#fdfdfd,#ececec);padding:1px 5px 0 3.500px}.s{flex:1}drop-arrow{width:9.500px;padding:0;margin-top:-2px}`,
 `<slot></slot><span class="s"></span><drop-arrow></drop-arrow>`);
define('q-input', `:host{display:flex;flex:none;height:22px;align-items:center;border:1px solid #ababab;border-radius:3px;background:#fff;padding:1px 3px 0 1.500px}`, `<slot></slot>`);
define('q-spin', `:host{display:flex;flex:none;height:20px;align-items:center;border:1px solid #ababab;border-radius:3px;background:#fff;padding-left:3.500px}.s{flex:1}.b{width:14px;height:100%;border-left:1px solid #c4c4c4;background:#f8f8f8;display:flex;flex-direction:column;align-items:center;justify-content:center;gap:3px;border-radius:0 2px 2px 0}:host([off]){background:#f0f0f0;color:#888}:host([off]) svg{opacity:.4}svg{display:block}`,
 `<slot></slot><span class="s"></span><span class="b"><svg width="8" height="4"><path d="M0 4h8L4 0z" fill="#555"/></svg><svg width="8" height="4"><path d="M0 0h8L4 4z" fill="#555"/></svg></span>`);
define('q-slider', `:host{display:flex;flex:none;align-items:center;height:14px}.f{height:5px;background:#1a8be8;border:1px solid #0d6dbd;border-radius:2px 0 0 2px;flex:1}.k{width:13px;height:13px;background:#fefefe;border:1px solid #a8a8a8;border-radius:3px;flex:none}.e{height:5px;background:#d6d6d6;border:1px solid #b4b4b4;border-left:0;border-radius:0 2px 2px 0;flex:1}:host([full]) .e{display:none}`,
 `<span class="f"></span><span class="k"></span><span class="e"></span>`);
define('q-button', `:host{display:flex;flex:none;align-items:center;justify-content:center;border:1px solid #ababab;border-radius:3px;background:linear-gradient(#fefefe,#efefef)}`, `<slot></slot>`);
define('group-box', `:host{display:block;background:#ececec;border:1px solid #d5d5d5;border-radius:2px}`, `<slot></slot>`);
define('form-row', `:host{display:flex;align-items:center;height:28px}.l{flex:none;width:var(--lw,157px);padding-top:2px}`, `<span class="l"><slot name="label"></slot></span><slot></slot>`);

const lab = (w, t) => `<fit-text slot="label" w="${w}">${t}</fit-text>`;
const sliderRow = (w, t) => `<form-row>${lab(w, t)}<q-slider style="width:158px;margin:-2px 7px 0 1px"></q-slider><q-spin style="width:49px"><fit-text w="6">0</fit-text></q-spin></form-row>`;
define('style-panel', `:host{display:block;width:407px;height:764px;padding:10px 0 0 12px;font:11px/13px "DejaVu Sans Condensed","DejaVu Sans",sans-serif}
 .top{width:395px;height:24px;margin-bottom:6px}.top q-icon{width:12px;height:12px;margin:-2px 4px 0 4px}
 .f{--lw:75px;padding-left:2px}.f q-combo{width:315px}.mm{display:flex;height:28px;align-items:center;padding-left:76.500px}.mm>fit-text{padding-top:1px}
 h3{display:flex;align-items:center;margin:0;font-size:11px;font-weight:700}
 group-box{width:394px;margin-left:1px;padding:7px 0 0 9px}
 .hue{display:flex}.hl{width:157px;padding-top:23px}.hr{width:215px}.c{display:flex;align-items:center;height:28px}`,
 `<q-combo class="top"><q-icon name="gray"></q-icon><fit-text w="77">Singleband gray</fit-text></q-combo>
 <div class="f"><form-row>${lab(50, 'Gray band')}<q-combo><fit-text w="67">Band 1 (Gray)</fit-text></q-combo></form-row>
 <form-row>${lab(68, 'Color gradient')}<q-combo><fit-text w="67">Black to white</fit-text></q-combo></form-row></div>
 <div class="mm"><fit-text w="16" style="margin-right:6.500px">Min</fit-text><q-input style="width:131px"><fit-text w="45">-13274.6</fit-text></q-input><fit-text w="20" style="margin:0 6.500px 0 5.500px">Max</fit-text><q-input style="width:130px"><fit-text w="42">9228.74</fit-text></q-input></div>
 <div class="f"><form-row style="height:32px"><span slot="label"><fit-text w="42">Contrast</fit-text><br><fit-text w="65">enhancement</fit-text></span><q-combo><fit-text w="87">Stretch to MinMax</fit-text></q-combo></form-row></div>
 <h3 style="height:28px;padding-left:7px"><svg width="8" height="12" style="margin:2px 8px 0 0"><path d="M.5 .5L7.500 6 .5 11.500z" fill="#444" stroke="#222"/></svg><fit-text w="141">Min / Max Value Settings</fit-text></h3>
 <h3 style="height:28px;padding-top:11px"><fit-text w="94">Layer Rendering</fit-text></h3>
 <group-box style="height:242px">
 <form-row>${lab(69, 'Blending mode')}<q-combo style="width:215px"><fit-text w="34">Normal</fit-text></q-combo></form-row>
 ${sliderRow(50, 'Brightness')}${sliderRow(50, 'Saturation')}${sliderRow(42, 'Contrast')}
 <form-row>${lab(47, 'Grayscale')}<q-combo style="width:215px"><fit-text w="16">Off</fit-text></q-combo></form-row>
 <div class="hue"><div class="hl"><fit-text w="19">Hue</fit-text></div><div class="hr"><div class="c"><q-check style="margin-top:-2px"></q-check><fit-text w="38" style="margin-left:4.500px">Colorize</fit-text>
 <q-button style="width:87px;height:22px;margin-left:auto;opacity:.65"><span style="width:79px;height:16px;background:#e3d9d9;border-radius:3px"></span></q-button><q-button style="width:12px;height:22px;opacity:.6;margin-left:1px"><drop-arrow style="width:8px;padding:0"></drop-arrow></q-button></div>
 <div class="c"><fit-text w="42" style="margin:1px 7px 0 0">Strength</fit-text><q-slider full style="width:103px;margin:-1px 7px 0 0"></q-slider><q-spin off style="width:56px"><fit-text w="29">100%</fit-text></q-spin></div></div></div>
 <q-button style="width:62px;height:23px;margin-left:233px;margin-top:3px"><q-icon name="undo" style="width:13px;height:13px;margin-right:3px"></q-icon><fit-text w="28" style="padding-top:1px">Reset</fit-text></q-button>
 </group-box>
 <h3 style="height:24px;padding-top:6px"><fit-text w="67">Resampling</fit-text></h3>
 <group-box style="height:102px;--lw:190px">
 <form-row>${lab(49, 'Zoomed in')}<q-combo style="width:182px"><fit-text w="89">Nearest neighbour</fit-text></q-combo></form-row>
 <form-row>${lab(57, 'Zoomed out')}<q-combo style="width:182px"><fit-text w="89">Nearest neighbour</fit-text></q-combo></form-row>
 <form-row>${lab(65, 'Oversampling')}<q-spin style="width:182px"><fit-text w="22">2,00</fit-text></q-spin></form-row></group-box>`);

define('styling-dock', `:host{display:block;width:456px;height:819px;margin-left:9px;font:11px/13px "DejaVu Sans Condensed","DejaVu Sans",sans-serif}
 dock-title{padding:0 1px}.main{display:flex;margin-top:5px}.side{width:38px;height:764px;display:flex;flex-direction:column;align-items:center}.side .t{height:33px;padding-top:6px}.side .k{width:38px;flex:1;background:#5d5d5d;display:flex;flex-direction:column;gap:8.500px;padding:5px 0 0 4px}
 .foot{display:flex;height:24px;align-items:center;margin-top:-23.500px;padding-left:41px}q-combo{width:453px;height:24px;margin-top:1px}.col{flex:1}`,
 `<dock-title><fit-text w="67">Layer Styling</fit-text></dock-title>
 <q-combo><q-icon name="ras" style="width:16px;height:16px;margin:-2px 4px 0 1px"></q-icon><fit-text w="40">GiroMDE</fit-text></q-combo>
 <div class="main"><div class="side"><div class="t"><q-icon name="palette" style="width:22px;height:22px"></q-icon></div><div class="k">${['transp','histo','hier','hist'].map(n => `<q-icon name="${n}" style="width:23px;height:23px"></q-icon>`).join('')}</div></div>
 <div class="col"><style-panel></style-panel></div></div>
 <div class="foot"><q-button style="width:24px;height:23px;margin-right:6px"><q-icon name="undo" style="width:14px;height:14px"></q-icon></q-button><q-button style="width:24px;height:23px"><q-icon name="redo" style="width:14px;height:14px"></q-icon></q-button>
 <q-check checked style="margin:-1px 4px 0 192px"></q-check><fit-text w="57">Live update</fit-text><q-button style="width:80px;height:21px;margin-left:12px"><fit-text w="27" style="margin-right:3px">Apply</fit-text></q-button></div>`);

define('status-bar', `:host{display:flex;height:21px;padding:3px 0 0 3px;overflow:hidden;font:11px/14px "DejaVu Sans Condensed","DejaVu Sans",sans-serif;align-items:flex-start}
 q-input,q-spin{height:24px}.t{margin-top:5px}q-icon{width:15px;height:15px;margin-top:3px}.dd{display:flex;align-items:center;width:19px;height:22px;border-left:1px solid #b4b4b4;padding-left:5px;margin:-3px 0 0 auto}`,
 `<q-input style="width:200px;padding-left:9px"><q-icon name="search" style="width:12px;height:12px;margin:-3px 7px 0 0"></q-icon><fit-text w="112" style="color:#808080">Type to locate (Ctrl+K)</fit-text></q-input>
 <fit-text class="t" w="53" style="margin-left:270px;margin-right:4px">Coordinate</fit-text><q-input style="width:98px;padding-left:5px"><fit-text w="83">490253,4655544</fit-text></q-input>
 <q-icon name="bug" style="margin-left:4px"></q-icon><fit-text class="t" w="25" style="margin:5px 4px 0 13px">Scale</fit-text><q-input style="width:81px;padding-right:0"><fit-text w="41">1:70051</fit-text><span class="dd"><drop-arrow></drop-arrow></span></q-input>
 <q-icon name="lock" style="width:13px;margin-left:12px;height:15px"></q-icon><fit-text class="t" w="44" style="margin:5px 4px 0 7px">Magnifier</fit-text><q-spin style="width:88px"><fit-text w="28">100%</fit-text></q-spin>
 <fit-text class="t" w="42" style="margin:5px 9px 0 8px">Rotation</fit-text><q-spin style="width:84px"><fit-text w="23">0,0 °</fit-text></q-spin>
 <q-check checked style="margin:4px 4px 0 6px"></q-check><fit-text class="t" w="35">Render</fit-text><q-icon name="crs" style="margin:3px 4px 0 18px"></q-icon><fit-text class="t" w="59">EPSG:25831</fit-text><q-icon name="msg" style="margin:4px 0 0 20px;width:16px;height:16px"></q-icon>`);

define('qgis-app', `:host{display:flex;flex-direction:column;width:1278px;height:978px;overflow:hidden;background:#efefef;color:#000}.mid{display:flex;height:819px;flex:none}title-bar,menu-bar,main-toolbars,status-bar{flex:none}`,
 `<title-bar></title-bar><menu-bar></menu-bar><main-toolbars></main-toolbars>
 <div class="mid"><source-bar></source-bar><layers-dock></layers-dock><map-canvas></map-canvas><styling-dock></styling-dock></div><status-bar></status-bar>`);

/* Spreads a run of text over the width given in w, in pixels. */
define('fit-text', `:host{display:inline-block;flex:none;white-space:nowrap}`, `<slot></slot>`, (el) => {
  const w = +el.getAttribute('w');
  el.style.letterSpacing = '0px';
  const n = el.textContent.length, nat = el.getBoundingClientRect().width;
  if (nat && w) { el.style.letterSpacing = ((w - nat) / n).toFixed(3) + 'px'; el.style.width = w + 'px'; }
});
</script>
</body>
</html>
